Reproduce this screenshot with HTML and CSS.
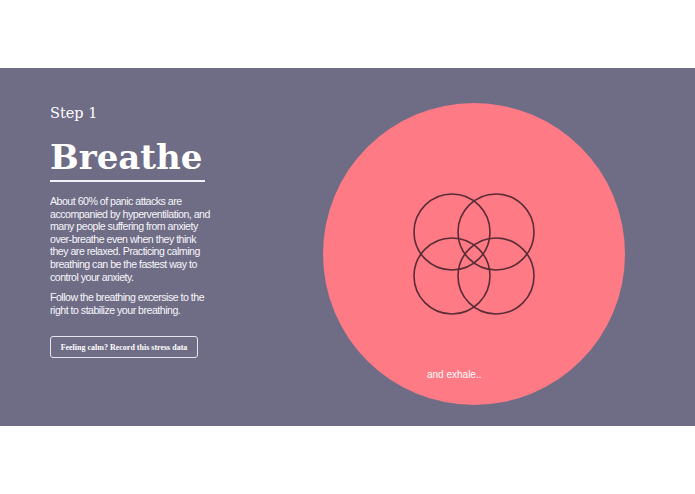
FILE: index.html
```html
<!DOCTYPE html>
<html>
<head>
<meta charset="utf-8">
<link rel="stylesheet" href="styles.css">
</head>
<body>
<section class="hero">
  <div class="intro">
    <div class="step">Step 1</div>
    <h1 class="title">Breathe</h1>
    <p class="copy">About 60% of panic attacks are accompanied by hyperventilation, and many people suffering from anxiety over-breathe even when they think they are relaxed. Practicing calming breathing can be the fastest way to control your anxiety.</p>
    <p class="copy">Follow the breathing excersise to the right to stabilize your breathing.</p>
    <button class="record">Feeling calm? Record this stress data</button>
  </div>
  <div class="orb">
    <svg class="flower" width="124" height="124" viewBox="0 0 124 124">
      <g fill="none" stroke="#5b2c36" stroke-width="1.6">
        <circle cx="40" cy="40" r="38"/>
        <circle cx="84" cy="40" r="38"/>
        <circle cx="40" cy="84" r="38"/>
        <circle cx="84" cy="84" r="38"/>
      </g>
    </svg>
    <span class="cue">and exhale..</span>
  </div>
</section>
</body>
</html>
```
FILE: styles.css
```css
html, body {
  margin: 0;
  padding: 0;
  background: #ffffff;
}
.hero {
  margin-top: 68px;
  height: 358px;
  background: #6f6c86;
  display: flex;
  align-items: flex-start;
}
.intro {
  width: 160px;
  margin-left: 50px;
  padding-top: 36px;
  color: #ffffff;
}
.step {
  font-family: "DejaVu Serif", serif;
  font-size: 14.5px;
  line-height: 18px;
}
.title {
  margin: 13px 0 0;
  font-family: "DejaVu Serif", serif;
  font-weight: bold;
  font-size: 34px;
  line-height: 44px;
  width: 155px;
  border-bottom: 2px solid #f2f0f5;
  padding-bottom: 1px;
}
.copy {
  font-family: "Liberation Sans", Arial, sans-serif;
  font-size: 10.6px;
  letter-spacing: -0.5px;
  line-height: 12.6px;
  margin: 13px 0 0;
  color: #f7f6fa;
}
.copy + .copy {
  margin-top: 8px;
}
.record {
  margin-top: 20px;
  width: 148px;
  height: 22px;
  background: transparent;
  border: 1px solid #e6e4ee;
  border-radius: 3px;
  color: #ffffff;
  font-family: "Liberation Serif", serif;
  font-weight: bold;
  font-size: 8px;
  padding: 0;
}
.orb {
  position: relative;
  width: 302px;
  height: 302px;
  margin-top: 35px;
  margin-left: 113px;
  border-radius: 50%;
  background: #fe7a85;
  display: flex;
  align-items: center;
  justify-content: center;
}
.cue {
  position: absolute;
  left: 104px;
  top: 266px;
  font-family: "Liberation Sans", Arial, sans-serif;
  font-size: 10px;
  color: #ffffff;
}
```
